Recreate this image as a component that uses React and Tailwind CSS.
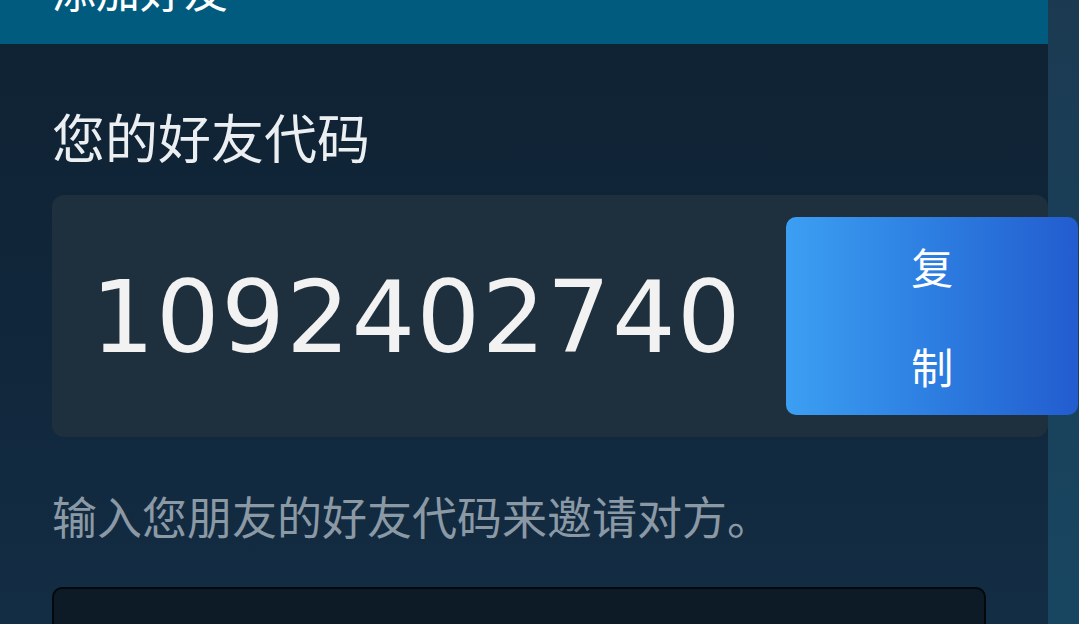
import React from 'react';

const cjk = { fontFamily: '"Noto Sans CJK SC", "Noto Sans", sans-serif' };

const FriendCode = ({ code }) => (
  <div className="flex h-[242px] w-[996px] items-center rounded-xl bg-[#1e2f3d] pl-[39px]">
    <span className="shrink-0 pt-[4px] text-[100px] leading-none tracking-[1.5px] text-[#f2f2f2] font-['DejaVu_Sans',sans-serif]">
      {code}
    </span>
    <button className="relative ml-[44px] flex h-[198px] w-[292px] shrink-0 flex-col items-center justify-center rounded-[10px] bg-gradient-to-r from-[#3c9ff2] to-[#235ccf] text-[42px] leading-[100px] text-white">
      <span>复</span>
      <span>制</span>
    </button>
  </div>
);

const App = () => {
  return (
    <div
      className="flex h-[624px] w-full overflow-hidden bg-gradient-to-b from-[#1b3a52] to-[#184661]"
      style={cjk}
    >
      <div className="flex w-[1048px] shrink-0 flex-col bg-gradient-to-b from-[#0f2232] via-[#10263a] to-[#132d44]">
        {/* header is scrolled partly out of view */}
        <div className="h-[44px] shrink-0 overflow-hidden bg-[#005b7f] px-[52px]">
          <div className="-mt-[33px] text-[44px] leading-none text-white">添加好友</div>
        </div>
        <div className="pl-[52px]">
          <h2 className="mt-[66px] text-[53px] leading-none text-[#eceff1]">您的好友代码</h2>
          <div className="mt-[32px]">
            <FriendCode code="1092402740" />
          </div>
          <p className="mt-[56px] text-[45px] leading-none text-[#8b99a5]">输入您朋友的好友代码来邀请对方。</p>
          <div className="mt-[49px] h-[90px] w-[934px] rounded-[10px] border-2 border-[#03080c] bg-[#0d1b26]" />
        </div>
      </div>
    </div>
  );
};

export default App;
